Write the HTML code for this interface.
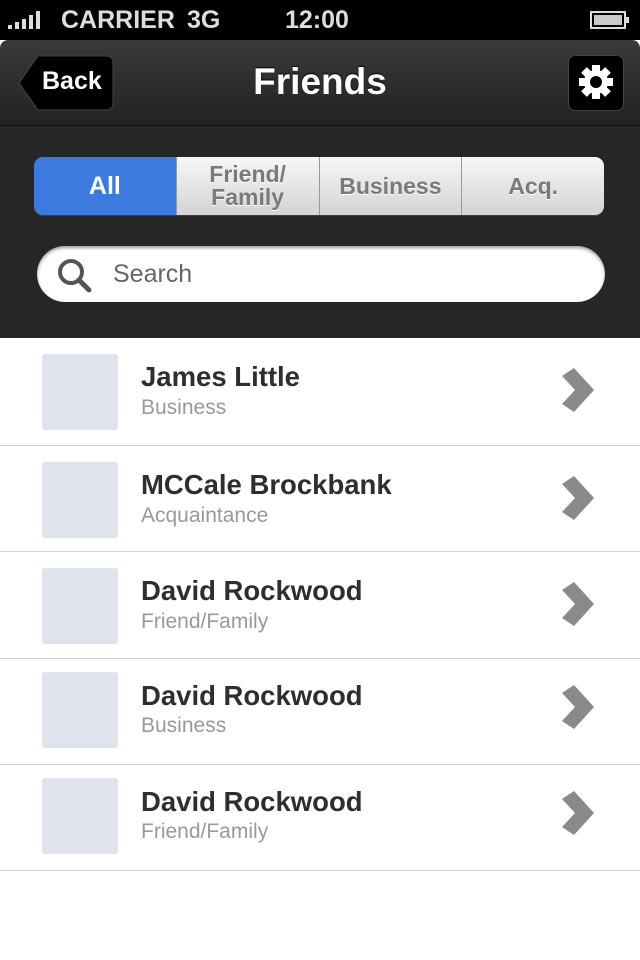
<!DOCTYPE html>
<html><head><meta charset="utf-8"><style>
*{margin:0;padding:0;box-sizing:border-box}
body{width:640px;height:960px;background:#fff;font-family:"Liberation Sans",Arial,sans-serif;position:relative;overflow:hidden}
.status{position:absolute;top:0;left:0;width:640px;height:40px;background:#000;color:#ddd;font-size:25px;font-weight:bold}
.nav{position:absolute;top:40px;left:0;width:640px;height:86px;background:linear-gradient(#3a3a3a,#222);border-radius:8px 8px 0 0;border-bottom:1px solid #111}
.dark{position:absolute;top:126px;left:0;width:640px;height:212px;background:#262626}
.seg{position:absolute;top:157px;left:34px;width:570px;height:58px;border-radius:9px;overflow:hidden;display:flex;box-shadow:0 1px 1px rgba(255,255,255,.15)}
.seg div{flex:1;display:flex;align-items:center;justify-content:center;text-align:center;font-weight:bold;font-size:23px;color:#7a7a7a;background:linear-gradient(#f7f7f7,#d4d4d4);border-left:1px solid #999;text-shadow:0 1px 0 #fff;line-height:23px}
.seg div.a{background:#3b7be0;color:#fff;border-left:none;text-shadow:none;font-size:25px}
.search{position:absolute;top:246px;left:37px;width:568px;height:56px;border-radius:28px;background:#fff;box-shadow:inset 0 2px 3px rgba(0,0,0,.4)}
.row{position:absolute;left:0;width:640px;height:106px;border-bottom:1px solid #cfcfcf}
.av{position:absolute;left:42px;top:16px;width:76px;height:76px;background:#dfe4ec;border-radius:3px}
.nm{position:absolute;left:141px;top:23px;font-size:27.5px;font-weight:bold;color:#2e2e2e}
.sb{position:absolute;left:141px;top:58px;font-size:21px;color:#999}
.ch{position:absolute;left:560px;top:30px}
</style></head><body>
<div class="status">
<svg style="position:absolute;left:7px;top:10px" width="40" height="20"><rect x="1" y="15" width="4" height="4" fill="#ddd"/><rect x="8" y="12" width="4" height="7" fill="#ddd"/><rect x="15" y="9" width="4" height="10" fill="#ddd"/><rect x="22" y="5" width="4" height="14" fill="#ddd"/><rect x="29" y="1" width="4" height="18" fill="#ddd"/></svg>
<span style="position:absolute;left:61px;top:6px">CARRIER</span><span style="position:absolute;left:187px;top:6px">3G</span>
<span style="position:absolute;left:285px;top:6px">12:00</span>
<svg style="position:absolute;left:590px;top:11px" width="40" height="20"><rect x="1" y="1" width="34" height="16" fill="none" stroke="#ddd" stroke-width="2"/><rect x="4" y="4" width="28" height="10" fill="#ccc"/><rect x="36" y="6" width="3" height="6" fill="#ddd"/></svg>
</div>
<div class="nav">
<svg style="position:absolute;left:18px;top:15px" width="96" height="56"><path d="M20 1 H88 Q95 1 95 8 V48 Q95 55 88 55 H20 L1 28 Z" fill="#000" stroke="#444"/></svg>
<span style="position:absolute;left:42px;top:27px;color:#fff;font-weight:bold;font-size:25px">Back</span>
<span style="position:absolute;left:0;width:640px;top:21px;text-align:center;color:#fff;font-weight:bold;font-size:37px;text-shadow:0 -1px 1px #000">Friends</span>
<div style="position:absolute;left:568px;top:15px;width:56px;height:56px;background:#000;border-radius:7px;border:1px solid #444"></div>
<svg style="position:absolute;left:578px;top:24px" width="36" height="36" viewBox="-18 -18 36 36"><g fill="#fff"><circle r="12"/><rect x="-4" y="-17" width="8" height="34"/><rect x="-4" y="-17" width="8" height="34" transform="rotate(45)"/><rect x="-4" y="-17" width="8" height="34" transform="rotate(90)"/><rect x="-4" y="-17" width="8" height="34" transform="rotate(135)"/></g><circle r="6" fill="#000"/></svg>
</div>
<div class="dark"></div>
<div class="seg"><div class="a">All</div><div>Friend/<br>Family</div><div>Business</div><div>Acq.</div></div>
<div class="search">
<svg style="position:absolute;left:19px;top:11px" width="38" height="38"><circle cx="15" cy="15" r="11" fill="none" stroke="#555" stroke-width="4"/><line x1="23" y1="23" x2="33" y2="33" stroke="#555" stroke-width="5" stroke-linecap="round"/></svg>
<span style="position:absolute;left:76px;top:14px;font-size:25px;color:#666">Search</span>
</div>
<div class="row" style="top:338px;height:108px"><div class="av"></div><div class="nm">James Little</div><div class="sb">Business</div><svg class="ch" width="36" height="46"><path d="M2 8 L14 0 L34 22 L14 44 L2 36 L15 22 Z" fill="#8a8a8a"/></svg></div>
<div class="row" style="top:446px"><div class="av"></div><div class="nm">MCCale Brockbank</div><div class="sb">Acquaintance</div><svg class="ch" width="36" height="46"><path d="M2 8 L14 0 L34 22 L14 44 L2 36 L15 22 Z" fill="#8a8a8a"/></svg></div>
<div class="row" style="top:552px;height:107px"><div class="av"></div><div class="nm">David Rockwood</div><div class="sb">Friend/Family</div><svg class="ch" width="36" height="46"><path d="M2 8 L14 0 L34 22 L14 44 L2 36 L15 22 Z" fill="#8a8a8a"/></svg></div>
<div class="row" style="top:659px"><div class="av" style="top:13px"></div><div class="nm" style="top:21px">David Rockwood</div><div class="sb" style="top:55px">Business</div><svg class="ch" width="36" height="46" style="top:26px"><path d="M2 8 L14 0 L34 22 L14 44 L2 36 L15 22 Z" fill="#8a8a8a"/></svg></div>
<div class="row" style="top:765px"><div class="av" style="top:13px"></div><div class="nm" style="top:21px">David Rockwood</div><div class="sb" style="top:55px">Friend/Family</div><svg class="ch" width="36" height="46" style="top:26px"><path d="M2 8 L14 0 L34 22 L14 44 L2 36 L15 22 Z" fill="#8a8a8a"/></svg></div>
</body></html>
